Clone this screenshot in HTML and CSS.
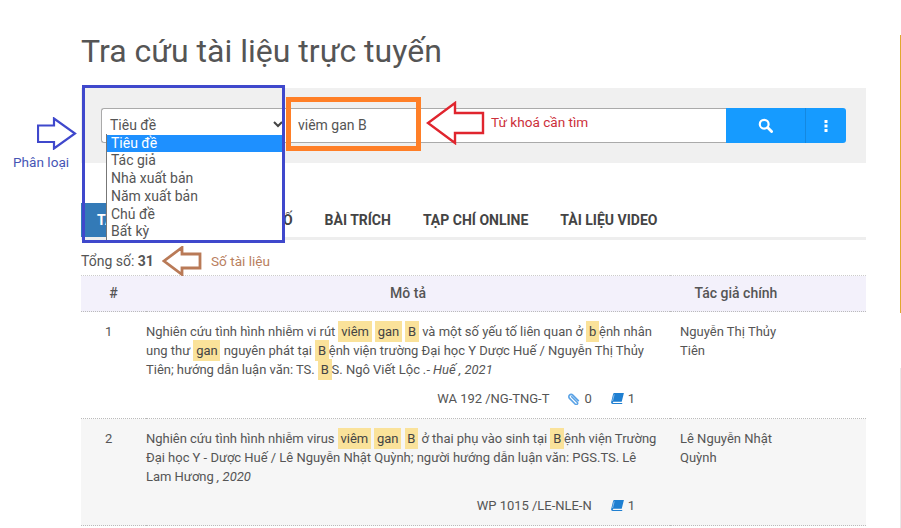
FILE: index.html
```html
<!DOCTYPE html>
<html lang="vi">
<head>
    <meta charset="UTF-8">
    <meta name="viewport" content="width=device-width, initial-scale=1.0">
    <title>Tra cứu tài liệu trực tuyến</title>
    <link rel="stylesheet" href="styles.css">
</head>
<body>
    <div class="container">
        <h1>Tra cứu tài liệu trực tuyến</h1>

        <!-- Search bar -->
        <div class="search-panel">
            <div class="search-group">
                <div class="search-select">
                    <span>Tiêu đề</span>
                    <svg class="chevron" width="10" height="7" viewBox="0 0 10 7"><path d="M1 1l4 4 4-4" fill="none" stroke="#444" stroke-width="2"/></svg>
                </div>
                <div class="search-input">viêm gan B</div>
                <div class="search-btn btn-main">
                    <svg width="15" height="15" viewBox="0 0 15 15"><circle cx="6.2" cy="6.2" r="4.4" fill="none" stroke="#fff" stroke-width="2.2"/><path d="M9.6 9.6l4 4" stroke="#fff" stroke-width="2.8" stroke-linecap="round"/></svg>
                </div>
                <div class="search-btn btn-more">
                    <svg width="4" height="12" viewBox="0 0 4 12"><rect x="0.5" width="3" height="3" fill="#fff"/><rect x="0.5" y="4.5" width="3" height="3" fill="#fff"/><rect x="0.5" y="9" width="3" height="3" fill="#fff"/></svg>
                </div>
            </div>
        </div>

        <!-- Tabs -->
        <div class="tabs">
            <div class="tab active">TÀI LIỆU GIẤY</div>
            <div class="tab">TÀI LIỆU SỐ</div>
            <div class="tab">BÀI TRÍCH</div>
            <div class="tab">TẠP CHÍ ONLINE</div>
            <div class="tab">TÀI LIỆU VIDEO</div>
        </div>

        <div class="total">Tổng số: <b>31</b></div>

        <!-- Results -->
        <table class="results">
            <thead>
                <tr>
                    <th class="col-no">#</th>
                    <th class="col-desc">Mô tả</th>
                    <th class="col-author">Tác giả chính</th>
                </tr>
            </thead>
            <tbody>
                <tr>
                    <td class="col-no">1</td>
                    <td class="col-desc">
                        <div>Nghiên cứu tình hình nhiễm vi rút <mark>viêm</mark> <mark>gan</mark> <mark>B</mark> và một số yếu tố liên quan ở <mark>b</mark>ệnh nhân ung thư <mark>gan</mark> nguyên phát tại <mark>B</mark>ệnh viện trường Đại học Y Dược Huế / Nguyễn Thị Thủy Tiên; hướng dẫn luận văn: TS. <mark>B</mark>S. Ngô Viết Lộc <i>.- Huế , 2021</i></div>
                        <div class="meta">
                            <span>WA 192 /NG-TNG-T</span>
                            <span class="meta-item">
                                <svg width="12" height="12" viewBox="0 0 12 12"><path d="M3.2 3.300l6 6a1.300 1.300 0 0 1-1.900 1.900L1.500 5.400a2.300 2.300 0 0 1 3.300-3.300l6 6" fill="none" stroke="#5ba3e6" stroke-width="1.600"/></svg>
                                0
                            </span>
                            <span class="meta-item">
                                <svg width="13" height="11" viewBox="0 0 14 12"><path d="M3.500 0H14l-2.400 9.500H2.600c-1 0-1 1.300 0 1.300h9.700l-.3 1.200H1.800C.4 12-.2 11 .1 9.800L2.200 1C2.400.4 2.900 0 3.500 0z" fill="#1f7fd1"/><path d="M3.400 1.500L1.600 8.800" stroke="#8cc0ee" stroke-width="1"/></svg>
                                1
                            </span>
                        </div>
                    </td>
                    <td class="col-author">Nguyễn Thị Thủy Tiên</td>
                </tr>
                <tr class="row-alt">
                    <td class="col-no">2</td>
                    <td class="col-desc">
                        <div>Nghiên cứu tình hình nhiễm virus <mark>viêm</mark> <mark>gan</mark> <mark>B</mark> ở thai phụ vào sinh tại <mark>B</mark>ệnh viện Trường Đại học Y - Dược Huế / Lê Nguyễn Nhật Quỳnh; người hướng dẫn luận văn: PGS.TS. Lê Lam Hương <i>, 2020</i></div>
                        <div class="meta">
                            <span>WP 1015 /LE-NLE-N</span>
                            <span class="meta-item">
                                <svg width="13" height="11" viewBox="0 0 14 12"><path d="M3.500 0H14l-2.400 9.500H2.600c-1 0-1 1.300 0 1.300h9.700l-.3 1.200H1.800C.4 12-.2 11 .1 9.800L2.200 1C2.400.4 2.900 0 3.500 0z" fill="#1f7fd1"/><path d="M3.400 1.500L1.600 8.800" stroke="#8cc0ee" stroke-width="1"/></svg>
                                1
                            </span>
                        </div>
                    </td>
                    <td class="col-author">Lê Nguyễn Nhật Quỳnh</td>
                </tr>
            </tbody>
        </table>
    </div>

    <!-- Open select list -->
    <div class="dropdown">
        <div class="option selected">Tiêu đề</div>
        <div class="option">Tác giả</div>
        <div class="option">Nhà xuất bản</div>
        <div class="option">Năm xuất bản</div>
        <div class="option">Chủ đề</div>
        <div class="option">Bất kỳ</div>
    </div>

    <!-- Annotations drawn over the screenshot -->
    <div class="box box-blue"></div>
    <div class="box box-orange"></div>

    <svg class="arrow arrow-blue" width="40" height="33" viewBox="0 0 40 33"><path d="M1 8.500H17V1.500L38 16.500 17 31.500V25H1z" fill="#fff" stroke="#3f48cc" stroke-width="2.200"/></svg>
    <svg class="arrow arrow-red" width="60" height="44" viewBox="0 0 60 44"><path d="M57 12H29V2L2 22 29 42V32H57z" fill="#fff" stroke="#e0252e" stroke-width="2.400"/></svg>
    <svg class="arrow arrow-brown" width="40" height="30" viewBox="0 0 40 30"><path d="M38 8H20V1.500L2 15 20 28.500V22H38z" fill="#fff" stroke="#b97a57" stroke-width="2.800"/></svg>

    <div class="note note-blue">Phân loại</div>
    <div class="note note-red">Từ khoá cần tìm</div>
    <div class="note note-brown">Số tài liệu</div>

    <div class="edge edge-yellow"></div>
    <div class="edge edge-grey"></div>
</body>
</html>
```

FILE: styles.css
```css
/* Global */
html, body {
    margin: 0;
    padding: 0;
}

body {
    font-family: Roboto, "Noto Sans", Arial, sans-serif;
    color: #555;
    background-color: #fff;
    height: 528px;
    overflow: hidden;
    position: relative;
}

.container {
    width: 785px;
    margin-left: 81px;
    padding-top: 33px;
}

h1 {
    margin: 0 0 18px;
    font-size: 32px;
    font-weight: 400;
    line-height: 37px;
    color: #555;
}

/* Search bar */
.search-panel {
    height: 75px;
    padding: 20px;
    box-sizing: border-box;
    background-color: #f0f0f0;
}

.search-group {
    display: flex;
    height: 35px;
}

.search-select {
    width: 188px;
    box-sizing: border-box;
    display: flex;
    align-items: center;
    justify-content: space-between;
    padding: 0 3px 2px 8px;
    background-color: #fff;
    border: 1px solid #aaa;
    border-right: none;
    border-radius: 3px 0 0 3px;
    font-size: 14px;
}

.chevron {
    margin-right: 3px;
}

.search-input {
    flex: 1;
    display: flex;
    align-items: center;
    padding: 0 0 2px 9px;
    background-color: #fff;
    border-top: 1px solid #aaa;
    border-bottom: 1px solid #aaa;
    font-size: 14px;
}

.search-btn {
    display: flex;
    align-items: center;
    justify-content: center;
    background-color: #169bff;
}

.btn-main {
    width: 79px;
    border-right: 1px solid #1488e0;
}

.btn-more {
    width: 40px;
    border-radius: 0 3px 3px 0;
}

/* Tabs */
.tabs {
    display: flex;
    height: 34px;
    margin-top: 40px;
    border-bottom: 3px solid #eee;
    font-size: 14px;
    font-weight: 700;
    color: #444;
}

.tab {
    padding: 0 16px;
    line-height: 34px;
    white-space: nowrap;
}

.tab.active {
    background-color: #337ab7;
    color: #fff;
}

.total {
    height: 35px;
    padding-top: 12px;
    box-sizing: border-box;
    font-size: 14px;
    line-height: 18px;
}

/* Results table */
.results {
    width: 100%;
    border-collapse: collapse;
    table-layout: fixed;
    font-size: 13px;
    line-height: 19px;
}

.results th {
    height: 35px;
    padding: 0;
    font-size: 14px;
    font-weight: 500;
    text-align: center;
    background-color: #f3f1fb;
    border-top: 1px dotted #ccc;
    border-bottom: 1px dotted #bbb;
}

.results td {
    padding: 10px;
    vertical-align: top;
    border-bottom: 1px dotted #bbb;
}

.results .col-no {
    width: 65px;
    box-sizing: border-box;
}

.results td.col-no {
    padding-left: 24px;
}

.results td.col-desc {
    padding-left: 0;
    letter-spacing: -0.02px;
}

.results .col-author {
    width: 196px;
    box-sizing: border-box;
}

.results th.col-author {
    padding-right: 64px;
}

.results td.col-author {
    padding-right: 70px;
}

.row-alt td {
    background-color: #f6f6f6;
}

mark {
    background-color: #fae29a;
    color: #444;
    padding: 3px 2.8px;
}

.meta {
    display: flex;
    justify-content: flex-end;
    align-items: center;
    gap: 19px;
    margin-top: 10px;
    padding-right: 25px;
}

.meta-item {
    display: inline-flex;
    align-items: center;
    gap: 4px;
}

/* Open select list */
.dropdown {
    position: absolute;
    left: 106px;
    top: 134px;
    width: 177px;
    font-size: 14px;
    line-height: 17.8px;
    background-color: #fff;
    border-left: 1px solid #777;
    padding-top: 0.5px;
}

.option {
    padding-left: 4px;
}

.option.selected {
    background-color: #1e90ff;
    color: #fff;
}

/* Annotations */
.box {
    position: absolute;
    box-sizing: border-box;
}

.box-blue {
    left: 82px;
    top: 85px;
    width: 203px;
    height: 158px;
    border: 3px solid #3f48cc;
}

.box-orange {
    left: 286px;
    top: 97px;
    width: 135px;
    height: 54px;
    border: 5px solid #ff7f27;
}

.arrow {
    position: absolute;
}

.arrow-blue {
    left: 37px;
    top: 117px;
}

.arrow-red {
    left: 426px;
    top: 101px;
}

.arrow-brown {
    left: 162px;
    top: 246px;
}

.note {
    position: absolute;
    font-size: 13.6px;
    white-space: nowrap;
}

.note-blue {
    left: 13px;
    top: 154px;
    color: #4755b5;
}

.note-red {
    left: 491px;
    top: 114px;
    color: #cc2f3a;
}

.note-brown {
    left: 211px;
    top: 253px;
    color: #b98060;
}

.edge {
    position: absolute;
    left: 900px;
    width: 1px;
}

.edge-yellow {
    top: 35px;
    height: 278px;
    background-color: #e0a92e;
}

.edge-grey {
    top: 368px;
    height: 160px;
    background-color: #e8e8e8;
}
```
